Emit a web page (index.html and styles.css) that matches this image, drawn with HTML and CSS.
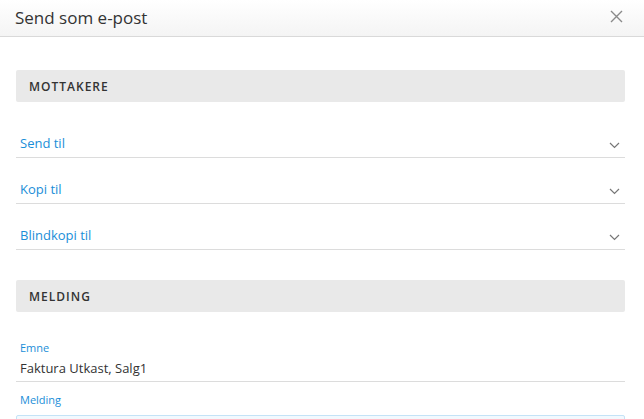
FILE: index.html
```html
<!DOCTYPE html>
<html lang="no">
<head>
    <title>Send som e-post</title>
    <link rel="stylesheet" href="styles.css">
</head>
<body>
    <div class="dialog">
        <div class="topp">
            <h1 class="tittel">Send som e-post</h1>
            <button class="lukk" type="button" aria-label="Lukk">
                <svg width="13" height="13" viewBox="0 0 13 13"><path d="M1 1L12 12M12 1L1 12" stroke="#8a8a8a" stroke-width="1.4" fill="none"/></svg>
            </button>
        </div>

        <div class="innhold">
            <h2 class="seksjon">Mottakere</h2>

            <div class="velg">
                <span class="velg-tekst">Send til</span>
                <svg class="pil" width="11" height="7" viewBox="0 0 11 7"><path d="M1 1L5.5 5.5L10 1" stroke="#777" stroke-width="1.2" fill="none"/></svg>
            </div>
            <div class="velg">
                <span class="velg-tekst">Kopi til</span>
                <svg class="pil" width="11" height="7" viewBox="0 0 11 7"><path d="M1 1L5.5 5.5L10 1" stroke="#777" stroke-width="1.2" fill="none"/></svg>
            </div>
            <div class="velg">
                <span class="velg-tekst">Blindkopi til</span>
                <svg class="pil" width="11" height="7" viewBox="0 0 11 7"><path d="M1 1L5.5 5.5L10 1" stroke="#777" stroke-width="1.2" fill="none"/></svg>
            </div>

            <h2 class="seksjon seksjon2">Melding</h2>

            <div class="felt">
                <label class="felt-navn">Emne</label>
                <div class="felt-verdi">Faktura Utkast, Salg1</div>
            </div>

            <label class="felt-navn melding-navn">Melding</label>
            <div class="tekstboks"></div>
        </div>
    </div>
</body>
</html>
```

FILE: styles.css
```css
body{
    margin: 0;
    background-color: white;
}

*{font-family: "Open Sans", sans-serif; box-sizing: border-box;}

.dialog{
    width: 644px;
    height: 419px;
    overflow: hidden;
}

.topp{
    height: 37px;
    background: linear-gradient(#ffffff, #f4f4f4);
    border-bottom: 1px solid #d9d9d9;
    display: flex;
    align-items: center;
    justify-content: space-between;
    padding: 0 21px 0 15px;
}

.tittel{
    margin: 0;
    font-size: 17px;
    font-weight: normal;
    color: #333;
    margin-top: -2px;
}

.lukk{
    border: none;
    background: none;
    padding: 0;
    width: 13px;
    height: 13px;
    display: flex;
    margin-top: -3px;
}

.innhold{
    padding: 33px 19px 0 16px;
}

.seksjon{
    margin: 0;
    height: 32px;
    background-color: #e9e9e9;
    border-radius: 2px;
    font-size: 12px;
    font-weight: 600;
    letter-spacing: 1px;
    text-transform: uppercase;
    color: #333;
    padding-left: 13px;
    display: flex;
    align-items: center;
}

.seksjon2{
    margin-top: 30px;
}

.velg{
    height: 46px;
    border-bottom: 1px solid #dcdcdc;
    display: flex;
    align-items: flex-end;
    justify-content: space-between;
    padding: 0 5px 5px 4px;
}

.velg:first-of-type{
    height: 56px;
}

.velg-tekst{
    font-size: 13px;
    color: #1a8ed8;
    line-height: 18px;
}

.pil{
    margin-bottom: 3px;
}

.felt{
    border-bottom: 1px solid #dcdcdc;
    padding: 29px 0 3px 4px;
}

.felt-navn{
    display: block;
    font-size: 11px;
    color: #1a8ed8;
    line-height: 14px;
}

.felt-verdi{
    font-size: 13px;
    color: #333;
    line-height: 20px;
    margin-top: 3px;
}

.melding-navn{
    margin: 11px 0 0 4px;
}

.tekstboks{
    margin-top: 8px;
    height: 60px;
    border: 1px solid #c4e3f7;
    background-color: #f2f9fe;
    border-radius: 2px;
}
```
